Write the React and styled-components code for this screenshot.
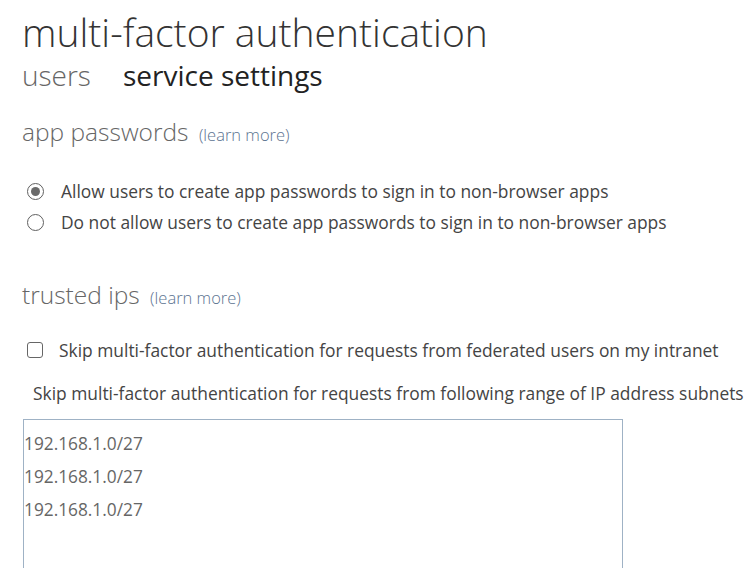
import styled, { createGlobalStyle } from "styled-components";

const GlobalStyle = createGlobalStyle`
  html, body {
    margin: 0;
    padding: 0;
    background: #ffffff;
  }
  body {
    font-family: "Open Sans", "Noto Sans", sans-serif;
    color: #444;
  }
`;

const Page = styled.div`
  padding: 8px 0 0 22px;
  width: 754px;
  height: 568px;
  box-sizing: border-box;
  overflow: hidden;
`;

const Title = styled.h1`
  margin: 0;
  font-size: 39px;
  font-weight: 300;
  line-height: 48px;
  color: #333;
  white-space: nowrap;
`;

const Tabs = styled.nav`
  display: flex;
  gap: 32px;
  margin-top: 2px;
`;

const Tab = styled.span`
  font-size: 28px;
  line-height: 34px;
  font-weight: ${(p) => (p.active ? 400 : 300)};
  color: ${(p) => (p.active ? "#222" : "#666")};
`;

const Section = styled.section`
  margin-top: ${(p) => p.gap || 20}px;
`;

const Heading = styled.h2`
  margin: 0;
  font-size: 24.5px;
  font-weight: 300;
  line-height: 32px;
  color: #666;
  white-space: nowrap;
`;

const Learn = styled.a`
  font-size: 16.5px;
  font-weight: 300;
  color: #5b7390;
  margin-left: 4px;
  text-decoration: none;
`;

const Options = styled.div`
  display: flex;
  flex-direction: column;
  gap: 7px;
  margin-top: ${(p) => p.gap || 28}px;
  padding-left: 5px;
`;

const Option = styled.label`
  display: flex;
  align-items: center;
  gap: ${(p) => p.gap || 17}px;
  font-size: 17.4px;
  line-height: 24px;
  color: #444;
  white-space: nowrap;
`;

const RadioDot = styled.span`
  width: 17px;
  height: 17px;
  border-radius: 50%;
  border: 1.5px solid #606060;
  box-sizing: border-box;
  display: flex;
  align-items: center;
  justify-content: center;
  flex-shrink: 0;
  &::after {
    content: "";
    display: ${(p) => (p.checked ? "block" : "none")};
    width: 9px;
    height: 9px;
    border-radius: 50%;
    background: #6a6a6a;
  }
`;

const Check = styled.span`
  width: 16px;
  height: 16px;
  border-radius: 3px;
  border: 1.5px solid #666;
  box-sizing: border-box;
  flex-shrink: 0;
`;

const Note = styled.p`
  margin: 19px 0 0 11px;
  font-size: 17.4px;
  line-height: 24px;
  color: #444;
  white-space: nowrap;
`;

const IpBox = styled.div`
  margin-top: 14px;
  margin-left: 1px;
  width: 600px;
  height: 200px;
  border: 1px solid #9fb2c5;
  padding: 7px 0 0 0;
  box-sizing: border-box;
`;

const Ip = styled.div`
  font-size: 17.3px;
  line-height: 33px;
  color: #666;
`;

const ips = ["192.168.1.0/27", "192.168.1.0/27", "192.168.1.0/27"];

export default function App() {
  return (
    <>
      <GlobalStyle />
      <Page>
        <Title>multi-factor authentication</Title>
        <Tabs>
          <Tab>users</Tab>
          <Tab active>service settings</Tab>
        </Tabs>

        <Section gap={24}>
          <Heading>
            app passwords <Learn href="#">(learn more)</Learn>
          </Heading>
          <Options>
            <Option>
              <RadioDot checked />
              Allow users to create app passwords to sign in to non-browser apps
            </Option>
            <Option>
              <RadioDot />
              Do not allow users to create app passwords to sign in to non-browser apps
            </Option>
          </Options>
        </Section>

        <Section gap={45}>
          <Heading>
            trusted ips <Learn href="#">(learn more)</Learn>
          </Heading>
          <Options gap={24}>
            <Option gap={16}>
              <Check />
              Skip multi-factor authentication for requests from federated users on my intranet
            </Option>
          </Options>
          <Note>
            Skip multi-factor authentication for requests from following range of IP address subnets
          </Note>
          <IpBox>
            {ips.map((ip, i) => (
              <Ip key={i}>{ip}</Ip>
            ))}
          </IpBox>
        </Section>
      </Page>
    </>
  );
}
